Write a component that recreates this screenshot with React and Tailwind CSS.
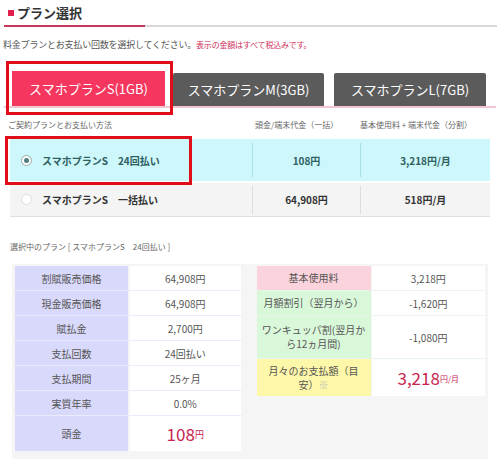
import React from 'react'

const leftRows = [
	{ label: '割賦販売価格', value: '64,908円', h: 'h-[25px]' },
	{ label: '現金販売価格', value: '64,908円', h: 'h-[25px]' },
	{ label: '賦払金', value: '2,700円', h: 'h-[25px]' },
	{ label: '支払回数', value: '24回払い', h: 'h-[25px]' },
	{ label: '支払期間', value: '25ヶ月', h: 'h-[25px]' },
	{ label: '実質年率', value: '0.0%', h: 'h-[25px]' },
]

const rightRows = [
	{ label: '基本使用料', value: '3,218円', bg: 'bg-[#fbd3dc]', h: 'h-[25px]' },
	{ label: '月額割引（翌月から）', value: '-1,620円', bg: 'bg-[#d9f7d9]', h: 'h-[25px]' },
	{ label: 'ワンキュッパ割(翌月から12ヵ月間)', value: '-1,080円', bg: 'bg-[#d9f7d9]', h: 'h-[43px]' },
]

const Radio = ({ checked }) => (
	<span
		className={
			'flex h-[11px] w-[11px] items-center justify-center rounded-full border ' +
			(checked ? 'border-[#9aa] bg-white' : 'border-[#ddd] bg-white')
		}>
		{checked && <span className="h-[5px] w-[5px] rounded-full bg-[#4f7f80]" />}
	</span>
)

export default function App() {
	return (
		<div
			className="relative h-[464px] w-[500px] overflow-hidden bg-white text-[#555]"
			style={{ fontFamily: '"Noto Sans CJK JP", "Noto Sans", sans-serif' }}>
			{/* heading */}
			<div className="flex h-[25px] items-center gap-[3px] pl-[8px]">
				<span className="h-[6px] w-[6px] bg-[#e2204e]" />
				<h2 className="text-[13px] font-bold leading-none text-[#333]">プラン選択</h2>
			</div>
			<div className="flex h-[2px] pl-[4px] pr-[3px]">
				<div className="w-[141px] bg-[#c8385a]" />
				<div className="flex-1 bg-[#d8d8d8]" />
			</div>

			<p className="mt-[12px] pl-[3px] text-[9px] leading-[12px] tracking-[-0.2px]">
				料金プランとお支払い回数を選択してください。
				<span className="text-[8px] text-[#d0305a]">表示の金額はすべて税込みです。</span>
			</p>

			{/* tabs */}
			<div className="relative mt-[10px] h-[44px]">
				<div className="flex items-end gap-[10px] pl-[12px] pt-[10px]">
					<button className="flex h-[35px] w-[153px] items-center justify-center bg-[#f53760] text-[13px] text-white">
						スマホプランS(1GB)
					</button>
					<button className="ml-[-2px] flex h-[33px] w-[151px] items-center justify-center rounded-t-[2px] bg-[#5b5b5b] text-[13px] text-white">
						スマホプランM(3GB)
					</button>
					<button className="flex h-[33px] w-[152px] items-center justify-center rounded-t-[2px] bg-[#5b5b5b] text-[13px] text-white">
						スマホプランL(7GB)
					</button>
				</div>
				<div className="mx-[4px] h-[2px] bg-[#f0c6d0]" />
				<div className="absolute left-[6px] top-0 h-[54px] w-[167px] border-[3px] border-[#e00d1a]" />
			</div>

			{/* plan list */}
			<div className="mt-[14px] flex pl-[8px] text-[8px] leading-[12px] text-[#666]">
				<span className="w-[247px]">ご契約プランとお支払い方法</span>
				<span className="w-[105px]">頭金/端末代金（一括）</span>
				<span>基本使用料 + 端末代金（分割）</span>
			</div>
			<div className="relative mx-[10px] mt-[8px]">
				<div className="flex h-[42px] items-center bg-[#cdf7fb] text-[10px] font-bold text-[#2f5f60]">
					<div className="flex w-[242px] items-center gap-[10px] pl-[11px]">
						<Radio checked />
						<span>スマホプランS　24回払い</span>
					</div>
					<div className="flex h-[34px] w-[108px] items-center justify-center border-l border-[#a8dde3]">108円</div>
					<div className="flex h-[34px] flex-1 items-center justify-center border-l border-[#a8dde3]">3,218円/月</div>
				</div>
				<div className="h-[2px] bg-white" />
				<div className="flex h-[34px] items-center border-b border-[#e0e0e0] bg-[#f4f4f4] text-[10px] font-bold text-[#333]">
					<div className="flex w-[242px] items-center gap-[10px] pl-[11px]">
						<Radio />
						<span>スマホプランS　一括払い</span>
					</div>
					<div className="flex h-[28px] w-[108px] items-center justify-center border-l border-[#ddd]">64,908円</div>
					<div className="flex h-[28px] flex-1 items-center justify-center border-l border-[#ddd]">518円/月</div>
				</div>
				<div className="absolute left-[-5px] top-[-3px] h-[49px] w-[187px] border-[3px] border-[#e00d1a]" />
			</div>

			<p className="mt-[24px] pl-[10px] text-[8px] leading-[12px] text-[#666]">
				選択中のプラン [ スマホプランS　24回払い ]
			</p>

			{/* details */}
			<div className="mx-[12px] mt-[11px] flex h-[195px] gap-[16px] bg-[#f5f5f5] px-[3px] pt-[2px]">
				<div className="flex w-[227px] flex-col self-start text-[10px]">
					{leftRows.map((r) => (
						<div key={r.label} className={'flex border-b border-[#ebebfb] ' + r.h}>
							<div className="flex w-[113px] items-center justify-center bg-[#d9d9fb]">{r.label}</div>
							<div className="ml-[2px] flex flex-1 items-center justify-center bg-white">{r.value}</div>
						</div>
					))}
					<div className="flex h-[35px]">
						<div className="flex w-[113px] items-center justify-center bg-[#d9d9fb]">頭金</div>
						<div className="ml-[2px] flex flex-1 items-center justify-center bg-white text-[#c8244f]">
							<span className="text-[17px] leading-none">108</span>
							<span className="mt-[3px] text-[9px]">円</span>
						</div>
					</div>
				</div>
				<div className="flex w-[230px] flex-col self-start text-[10px]">
					{rightRows.map((r) => (
						<div key={r.label} className={'flex border-b border-[#eaf5ea] ' + r.h}>
							<div className={'flex w-[114px] items-center justify-center px-[4px] text-center leading-[14px] ' + r.bg}>
								{r.label}
							</div>
							<div className="ml-[1px] flex flex-1 items-center justify-center bg-white">{r.value}</div>
						</div>
					))}
					<div className="flex h-[37px]">
						<div className="flex w-[114px] items-center justify-center bg-[#fdf7a9] px-[4px] text-center leading-[14px]">
							<span>
								月々のお支払額（目
								<br />
								安）<span className="text-[#bbb]">※</span>
							</span>
						</div>
						<div className="ml-[1px] flex flex-1 items-center justify-center bg-white text-[#c8244f]">
							<span className="text-[17px] leading-none">3,218</span>
							<span className="mt-[3px] text-[8px]">円/月</span>
						</div>
					</div>
				</div>
			</div>
		</div>
	)
}
